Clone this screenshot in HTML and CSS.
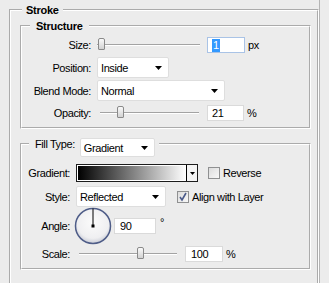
FILE: index.html
```html
<!DOCTYPE html>
<html lang="en">
<head>
<meta charset="UTF-8">
<meta name="viewport" content="width=device-width, initial-scale=1.0">
<link rel="stylesheet" href="styles.css">
<title>Stroke</title>
</head>
<body>
  <div class="panel">
    <fieldset class="box outer">
      <legend class="title">Stroke</legend>

      <fieldset class="box structure">
        <legend class="title sub">Structure</legend>
        <div class="row">
          <span class="lbl">Size:</span>
          <div class="slider size-slider"><span class="thumb" style="left:1px"></span></div>
          <div class="field focus size-field"><span class="sel">1</span></div>
          <span class="unit">px</span>
        </div>
        <div class="row gap2">
          <span class="lbl">Position:</span>
          <div class="select position-select">Inside<svg class="arrow" width="7" height="4" viewBox="0 0 7 4"><polygon points="0,0 7,0 3.5,4"/></svg></div>
        </div>
        <div class="row gap2">
          <span class="lbl">Blend Mode:</span>
          <div class="select blend-select">Normal<svg class="arrow" width="7" height="4" viewBox="0 0 7 4"><polygon points="0,0 7,0 3.5,4"/></svg></div>
        </div>
        <div class="row gap2 short">
          <span class="lbl">Opacity:</span>
          <div class="slider opacity-slider"><span class="thumb" style="left:17px"></span></div>
          <div class="field opacity-field">21</div>
          <span class="unit">%</span>
        </div>
      </fieldset>

      <fieldset class="box fill">
        <legend class="fill-legend">
          <span>Fill Type:</span>
          <div class="select type-select">Gradient<svg class="arrow" width="7" height="4" viewBox="0 0 7 4"><polygon points="0,0 7,0 3.5,4"/></svg></div>
        </legend>
        <div class="row grad-row">
          <span class="lbl lbl-fill">Gradient:</span>
          <div class="swatch">
            <div class="swatch-fill"></div>
            <div class="swatch-drop"><svg width="5" height="3" viewBox="0 0 5 3"><polygon points="0,0 5,0 2.5,3"/></svg></div>
          </div>
          <span class="check reverse-check"></span>
          <span class="check-text">Reverse</span>
        </div>
        <div class="row style-row">
          <span class="lbl lbl-fill">Style:</span>
          <div class="select style-select">Reflected<svg class="arrow" width="7" height="4" viewBox="0 0 7 4"><polygon points="0,0 7,0 3.5,4"/></svg></div>
          <span class="check checked align-check"><svg width="10" height="10" viewBox="0 0 10 10"><polyline points="2,5 4,8 8,1" fill="none" stroke="#4a5a8a" stroke-width="1.6"/></svg></span>
          <span class="check-text">Align with Layer</span>
        </div>
        <div class="row angle-row">
          <span class="lbl lbl-fill">Angle:</span>
          <svg class="dial" width="38" height="38" viewBox="0 0 38 38">
            <defs>
              <radialGradient id="dialFace" cx="50%" cy="40%" r="60%">
                <stop offset="0%" stop-color="#fbfbfb"/>
                <stop offset="75%" stop-color="#efeff1"/>
                <stop offset="100%" stop-color="#c9ccd6"/>
              </radialGradient>
            </defs>
            <circle cx="19" cy="19" r="17.5" fill="url(#dialFace)" stroke="#4f5d88" stroke-width="1.5"/>
            <line x1="19" y1="19" x2="19" y2="1.5" stroke="#000" stroke-width="1"/>
            <rect x="17.5" y="17.5" width="3" height="3" fill="#000"/>
          </svg>
          <div class="field angle-field">90</div>
          <span class="degree">°</span>
        </div>
        <div class="row scale-row">
          <span class="lbl lbl-fill">Scale:</span>
          <div class="slider scale-slider"><span class="thumb" style="left:58px"></span></div>
          <div class="field scale-field">100</div>
          <span class="unit">%</span>
        </div>
      </fieldset>
    </fieldset>
  </div>
</body>
</html>
```

FILE: styles.css
```css
html, body {
  margin: 0;
  overflow: hidden;
}

body {
  background-color: #ececec;
  color: #000;
  font-family: "Liberation Sans", Arial, sans-serif;
  font-size: 11px;
  letter-spacing: -0.4px; /* closer to the narrow dialog font */
}

.panel {
  width: 320px;
  height: 283px;
  box-sizing: border-box;
  border-right: 1px solid #b4b4b4;
  padding: 3px 0 0 9px;
}

/* etched frame, grey line with white line beside it */
.box {
  margin: 0;
  min-width: 0;
  border: 2px groove #fff;
}

.outer {
  width: 310px;
  box-sizing: border-box;
  padding: 2px 6px 40px 9px;
}

.title {
  font-weight: bold;
  letter-spacing: -0.25px;
  line-height: 14px;
  height: 14px;
  margin-left: 2px;
  padding: 0 4px;
}

.sub {
  margin-left: 8px;
  padding: 0 6px;
}

.structure {
  padding: 1px 0 5px;
}

.fill {
  margin-top: 8px;
  padding: 12px 0 6px;
}

.fill-legend {
  display: flex;
  align-items: flex-start;
  height: 14px;
  line-height: 14px;
  margin-left: 7px;
  padding: 0 4px 0 6px;
}

.fill-legend span {
  margin-right: 5px;
}

.row {
  display: flex;
  align-items: center;
  height: 21px;
}

.gap2 {
  margin-top: 2px;
}

.short {
  height: 19px;
}

.lbl {
  width: 69px;
  margin-right: 5px;
  text-align: right;
  flex: none;
}

.lbl-fill {
  width: 48px;
  margin-right: 6px;
}

/* sliders */
.slider {
  position: relative;
  height: 0;
  border-top: 1px solid #a3a3a3;
  border-bottom: 1px solid #fff;
  flex: none;
}

.thumb {
  position: absolute;
  top: -7px;
  width: 5px;
  height: 10px;
  border: 1px solid #8a8a8a;
  border-radius: 2px 2px 1px 1px;
  background: linear-gradient(#fafafa, #d2d2d2);
}

.size-slider {
  width: 103px;
  margin-left: 1px;
}

.opacity-slider {
  width: 99px;
  margin-left: 4px;
}

.scale-slider {
  width: 98px;
  margin-left: 3px;
}

/* text fields */
.field {
  height: 14px;
  line-height: 14px;
  padding: 0 4px;
  background: #fff;
  border: 1px solid #dadada;
  flex: none;
  box-sizing: content-box;
}

.focus {
  border-color: #a9c3e6;
}

.sel {
  display: inline-block;
  background-color: #3399ff;
  color: #fff;
  padding: 0 1px;
  line-height: 13px;
}

.size-field {
  width: 28px;
  margin-left: 7px;
}

.opacity-field {
  width: 27px;
  margin-left: 8px;
}

.angle-field {
  width: 30px;
  margin-left: 2px;
  padding: 0 5px;
}

.scale-field {
  width: 26px;
  margin-left: 8px;
  padding: 0 5px;
}

.unit {
  margin-left: 3px;
}

.degree {
  margin-left: 4px;
  align-self: flex-start;
  margin-top: 9px;
}

/* drop-down lists */
.select {
  display: flex;
  align-items: center;
  background: #fff;
  border: 1px solid #dedede;
  border-radius: 2px;
  padding: 0 6px 0 3px;
  box-sizing: border-box;
  flex: none;
}

.select .arrow {
  margin-left: auto;
}

.position-select {
  width: 72px;
  height: 21px;
  margin-left: 1px;
}

.blend-select {
  width: 128px;
  height: 21px;
  margin-left: 1px;
}

.type-select {
  width: 75px;
  height: 19px;
  margin-top: 1px;
}

.style-select {
  width: 90px;
  height: 21px;
}

/* gradient picker */
.grad-row {
  height: 20px;
}

.swatch {
  display: flex;
  width: 122px;
  height: 18px;
  box-sizing: border-box;
  border: 1px solid #1c1c1c;
  background: #fff;
  padding: 1px 0 1px 1px;
  flex: none;
}

.swatch-fill {
  flex: 1;
  background: linear-gradient(to right, #000, #fff);
}

.swatch-drop {
  width: 10px;
  border-left: 1px solid #000;
  margin-top: -1px;
  margin-bottom: -1px;
  background: #f4f4f4;
  display: flex;
  align-items: center;
  justify-content: center;
}

/* check boxes */
.check {
  width: 10px;
  height: 10px;
  border: 1px solid #8f9091;
  background: linear-gradient(135deg, #dcdcdc, #f8f8f8);
  display: flex;
  align-items: center;
  justify-content: center;
  flex: none;
}

.reverse-check {
  margin-left: 10px;
}

.align-check {
  margin-left: 11px;
}

.check-text {
  margin-left: 3px;
}

.style-row {
  margin-top: 3px;
}

.angle-row {
  height: 37px;
}

.dial {
  margin-left: -2px;
  flex: none;
}

.scale-row {
  height: 17px;
  margin-top: 1px;
}
```
